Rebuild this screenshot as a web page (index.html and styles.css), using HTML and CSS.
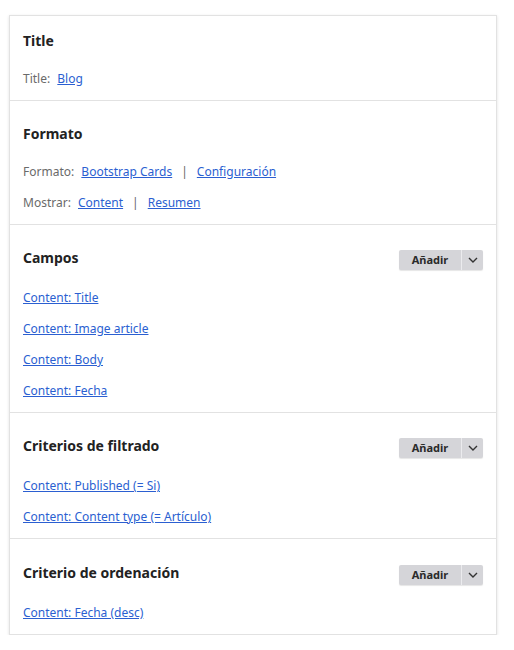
FILE: index.html
```html
<!DOCTYPE html>
<html lang="es">
<head>
<meta charset="utf-8">
<link rel="stylesheet" href="styles.css">
</head>
<body>
<div class="card">
  <section class="sec">
    <div class="sec-head"><h3>Title</h3></div>
    <div class="row"><span class="label">Title:</span> <a href="#">Blog</a></div>
  </section>
  <section class="sec">
    <div class="sec-head"><h3>Formato</h3></div>
    <div class="row"><span class="label">Formato:</span> <a href="#">Bootstrap Cards</a><span class="sep">|</span><a href="#">Configuración</a></div>
    <div class="row"><span class="label">Mostrar:</span> <a href="#">Content</a><span class="sep">|</span><a href="#">Resumen</a></div>
  </section>
  <section class="sec">
    <div class="sec-head"><h3>Campos</h3>
      <div class="btn"><span class="btn-main">Añadir</span><span class="btn-toggle"><svg width="10" height="6" viewBox="0 0 10 6"><path d="M1 1l4 4 4-4" fill="none" stroke="#333" stroke-width="1.4"/></svg></span></div>
    </div>
    <div class="row"><a href="#">Content: Title</a></div>
    <div class="row"><a href="#">Content: Image article</a></div>
    <div class="row"><a href="#">Content: Body</a></div>
    <div class="row"><a href="#">Content: Fecha</a></div>
  </section>
  <section class="sec">
    <div class="sec-head"><h3>Criterios de filtrado</h3>
      <div class="btn"><span class="btn-main">Añadir</span><span class="btn-toggle"><svg width="10" height="6" viewBox="0 0 10 6"><path d="M1 1l4 4 4-4" fill="none" stroke="#333" stroke-width="1.4"/></svg></span></div>
    </div>
    <div class="row"><a href="#">Content: Published (= Si)</a></div>
    <div class="row"><a href="#">Content: Content type (= Artículo)</a></div>
  </section>
  <section class="sec">
    <div class="sec-head"><h3>Criterio de ordenación</h3>
      <div class="btn"><span class="btn-main">Añadir</span><span class="btn-toggle"><svg width="10" height="6" viewBox="0 0 10 6"><path d="M1 1l4 4 4-4" fill="none" stroke="#333" stroke-width="1.4"/></svg></span></div>
    </div>
    <div class="row"><a href="#">Content: Fecha (desc)</a></div>
  </section>
</div>
</body>
</html>
```
FILE: styles.css
```css
html, body { background: #fff; }
body {
  margin: 0;
  padding: 15px 17px 0 9px;
  font-family: "Noto Sans", "Open Sans", sans-serif;
  font-size: 12px;
  color: #222;
}
.card {
  width: 488px;
  box-sizing: border-box;
  border: 1px solid #e2e2e2;
  box-shadow: 0 1px 3px rgba(0,0,0,0.12);
  background: #fff;
}
.sec {
  padding: 23px 13px 11px;
  border-top: 1px solid #e2e2e2;
  display: flex;
  flex-direction: column;
  gap: 11px;
}
.sec:first-child { border-top: 0; padding-top: 15px; }
.sec:last-child { padding-top: 24px; }
.sec-head {
  display: flex;
  align-items: flex-start;
  justify-content: space-between;
  margin-bottom: 7px;
}
h3 {
  margin: 0;
  font-size: 14px;
  font-weight: 700;
  color: #222;
  line-height: 20px;
}
.row { line-height: 20px; color: #666; }
.label { color: #6a6a6a; margin-right: 4px; }
a { color: #2b5fd1; text-decoration: underline; }
.sep { color: #666; margin: 0 9px; }
.btn {
  display: flex;
  height: 20px;
  background: #d5d5d9;
  border-radius: 2px;
  box-shadow: 0 1px 1px rgba(0,0,0,0.1);
  margin-top: 2px;
}
.btn-main {
  width: 62px;
  text-align: center;
  font-size: 11px;
  font-weight: 700;
  line-height: 20px;
  color: #2a2a2a;
  border-right: 1px solid #ebebee;
}
.btn-toggle {
  width: 21px;
  display: flex;
  align-items: center;
  justify-content: center;
}
```
